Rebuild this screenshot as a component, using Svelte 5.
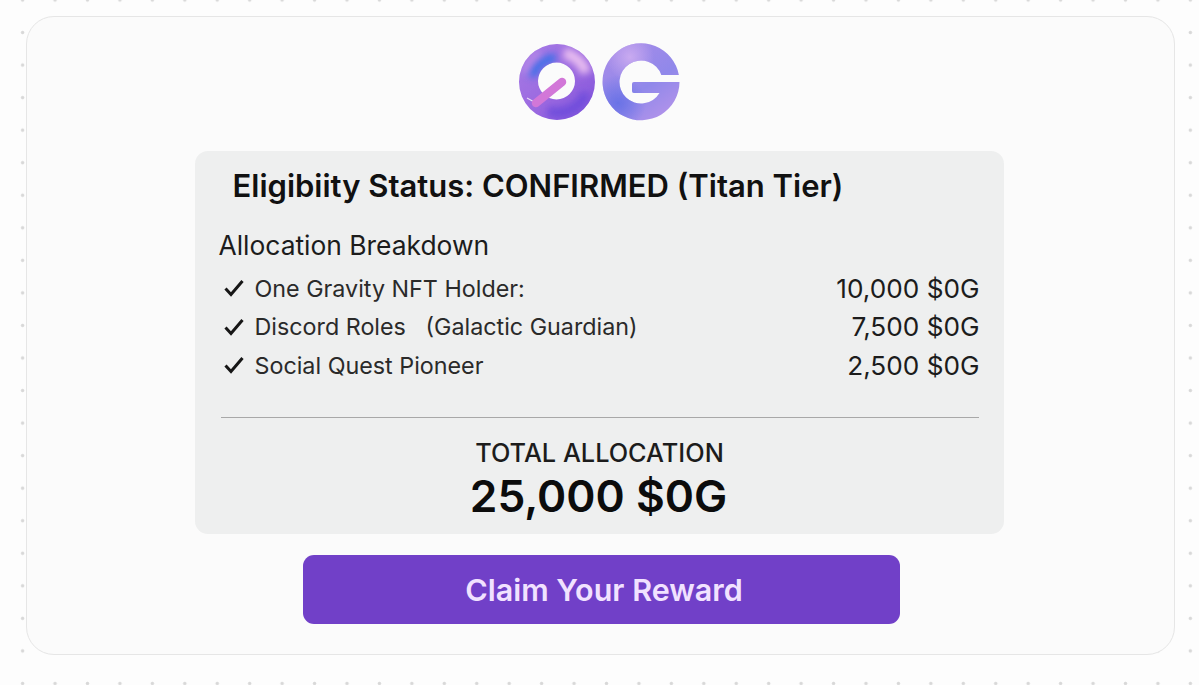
<script>
  const rows = [
    { label: 'One Gravity NFT Holder:', amount: '10,000 $0G' },
    { label: 'Discord Roles\u00a0\u00a0\u00a0(Galactic Guardian)', amount: '7,500 $0G' },
    { label: 'Social Quest Pioneer', amount: '2,500 $0G' }
  ];

  const gShape =
    'M160.9 32 A38.5 38.5 0 1 0 161.5 39 H116 Q114 39 114 41 V48 Q114 50 116 50 H141.5 A21.5 21.5 0 1 1 143.3 32 Z';
</script>

<div class="page">
  <div class="card">
    <svg class="logo" viewBox="0 0 163 80" width="163" height="80" aria-label="0G logo">
      <defs>
        <linearGradient id="ringA" x1="0" y1="0" x2="1" y2="1">
          <stop offset="0" stop-color="#a67ce6" />
          <stop offset="0.5" stop-color="#9c6ae0" />
          <stop offset="1" stop-color="#7d50da" />
        </linearGradient>
        <linearGradient id="ringG" x1="0.1" y1="0" x2="0.8" y2="1">
          <stop offset="0" stop-color="#a98ce8" />
          <stop offset="0.6" stop-color="#9088ea" />
          <stop offset="1" stop-color="#b393ea" />
        </linearGradient>
        <radialGradient id="gBlue" gradientUnits="userSpaceOnUse" cx="100" cy="60" r="28">
          <stop offset="0" stop-color="#6a72e6" />
          <stop offset="1" stop-color="#6a72e6" stop-opacity="0" />
        </radialGradient>
        <radialGradient id="gPink" gradientUnits="userSpaceOnUse" cx="112" cy="14" r="24">
          <stop offset="0" stop-color="#c9aaf0" />
          <stop offset="1" stop-color="#c9aaf0" stop-opacity="0" />
        </radialGradient>
        <filter id="soft" x="-60%" y="-60%" width="220%" height="220%">
          <feGaussianBlur stdDeviation="3.5" />
        </filter>
        <filter id="edge" x="-5%" y="-5%" width="110%" height="110%">
          <feGaussianBlur stdDeviation="0.5" />
        </filter>
        <clipPath id="ringClip">
          <path clip-rule="evenodd" d="M1 39 A38 38 0 1 1 77 39 A38 38 0 1 1 1 39 Z M20 38 A18.5 18.5 0 1 0 57 38 A18.5 18.5 0 1 0 20 38 Z" />
        </clipPath>
      </defs>
      <g filter="url(#edge)">
        <g clip-path="url(#ringClip)">
          <rect width="80" height="80" fill="url(#ringA)" />
          <path d="M14 34 A26 26 0 0 1 38 15" fill="none" stroke="#3f6fe8" stroke-width="9" filter="url(#soft)" />
          <path d="M46 10 A30 30 0 0 1 68 30" fill="none" stroke="#e8bdf0" stroke-width="11" filter="url(#soft)" />
          <path d="M6 30 A34 34 0 0 1 22 9" fill="none" stroke="#b98ce8" stroke-width="6" filter="url(#soft)" />
          <path d="M30 68 A30 30 0 0 0 68 50" fill="none" stroke="#6f4edc" stroke-width="10" filter="url(#soft)" />
        </g>
        <path d="M9 55 L18 60" stroke="#e9dcf6" stroke-width="1.2" />
        <path d="M18 60 L44 39" stroke="#d277d8" stroke-width="8.5" stroke-linecap="round" />
        <path d={gShape} fill="url(#ringG)" />
        <path d={gShape} fill="url(#gBlue)" />
        <path d={gShape} fill="url(#gPink)" />
      </g>
    </svg>

    <section class="panel">
      <h1>Eligibiity Status: CONFIRMED (Titan Tier)</h1>
      <h2>Allocation Breakdown</h2>
      <ul>
        {#each rows as row}
          <li>
            <svg class="check" viewBox="0 0 20 18" width="20" height="18">
              <path d="M1.5 9.5 L7 15.5 L18.5 2" fill="none" stroke="#161616" stroke-width="3" />
            </svg>
            <span class="label">{row.label}</span>
            <span class="amount">{row.amount}</span>
          </li>
        {/each}
      </ul>
      <hr />
      <div class="total">
        <div class="total-label">TOTAL ALLOCATION</div>
        <div class="total-value">25,000 $0G</div>
      </div>
    </section>

    <button class="claim">Claim Your Reward</button>
  </div>
</div>

<style>
  :global(body) {
    margin: 0;
    background: #fdfdfd;
  }
  .page {
    box-sizing: border-box;
    width: 1199px;
    height: 685px;
    padding: 16px 24px 30px 26px;
    overflow: hidden;
    font-family: Inter, "Liberation Sans", sans-serif;
    background-image: radial-gradient(circle, #d8d8d8 0, #d8d8d8 1.2px, transparent 2.2px);
    background-size: 32.45px 32.55px;
    background-position: 6.4px -16.3px;
  }
  .card {
    box-sizing: border-box;
    height: 639px;
    padding-top: 26px;
    display: flex;
    flex-direction: column;
    align-items: center;
    background: #fbfbfb;
    border: 1.5px solid #e6e6e6;
    border-radius: 28px;
  }
  .logo {
    display: block;
    margin-left: -3px;
  }
  .panel {
    box-sizing: border-box;
    width: 809px;
    height: 383px;
    margin-top: 28px;
    margin-left: -3px;
    padding: 17px 25px 0 24px;
    background: #eeefef;
    border-radius: 13px;
    color: #1c1c1c;
  }
  h1 {
    margin: 0 0 0 14px;
    font-size: 31px;
    line-height: 36px;
    font-weight: 600;
    color: #111;
    white-space: nowrap;
  }
  h2 {
    margin: 26px 0 0;
    font-size: 26.4px;
    line-height: 30px;
    font-weight: 400;
  }
  ul {
    list-style: none;
    margin: 9px 0 0;
    padding: 0;
  }
  li {
    display: flex;
    align-items: center;
    height: 38.5px;
    font-size: 23.3px;
    font-weight: 400;
    color: #2a2a2a;
  }
  .check {
    margin: 0 11px 0 5px;
  }
  .amount {
    margin-left: auto;
    margin-right: -1px;
    font-size: 26.2px;
    color: #1c1c1c;
  }
  hr {
    margin: 32px 0 0 2px;
    border: none;
    border-top: 1px solid #a8a8a8;
  }
  .total {
    text-align: center;
    margin-top: 19px;
    margin-left: 2px;
  }
  .total-label {
    font-size: 25.3px;
    line-height: 32px;
    font-weight: 500;
    color: #1c1c1c;
  }
  .total-value {
    margin-top: 1px;
    margin-right: 2px;
    font-size: 44.3px;
    line-height: 52px;
    font-weight: 600;
    color: #0c0c0c;
  }
  .claim {
    width: 597px;
    height: 69px;
    margin-top: 21px;
    margin-left: 1px;
    padding-left: 12px;
    border: none;
    border-radius: 11px;
    background: #7140c8;
    color: #f1e2ff;
    font-family: inherit;
    font-size: 30.5px;
    font-weight: 600;
  }
</style>
